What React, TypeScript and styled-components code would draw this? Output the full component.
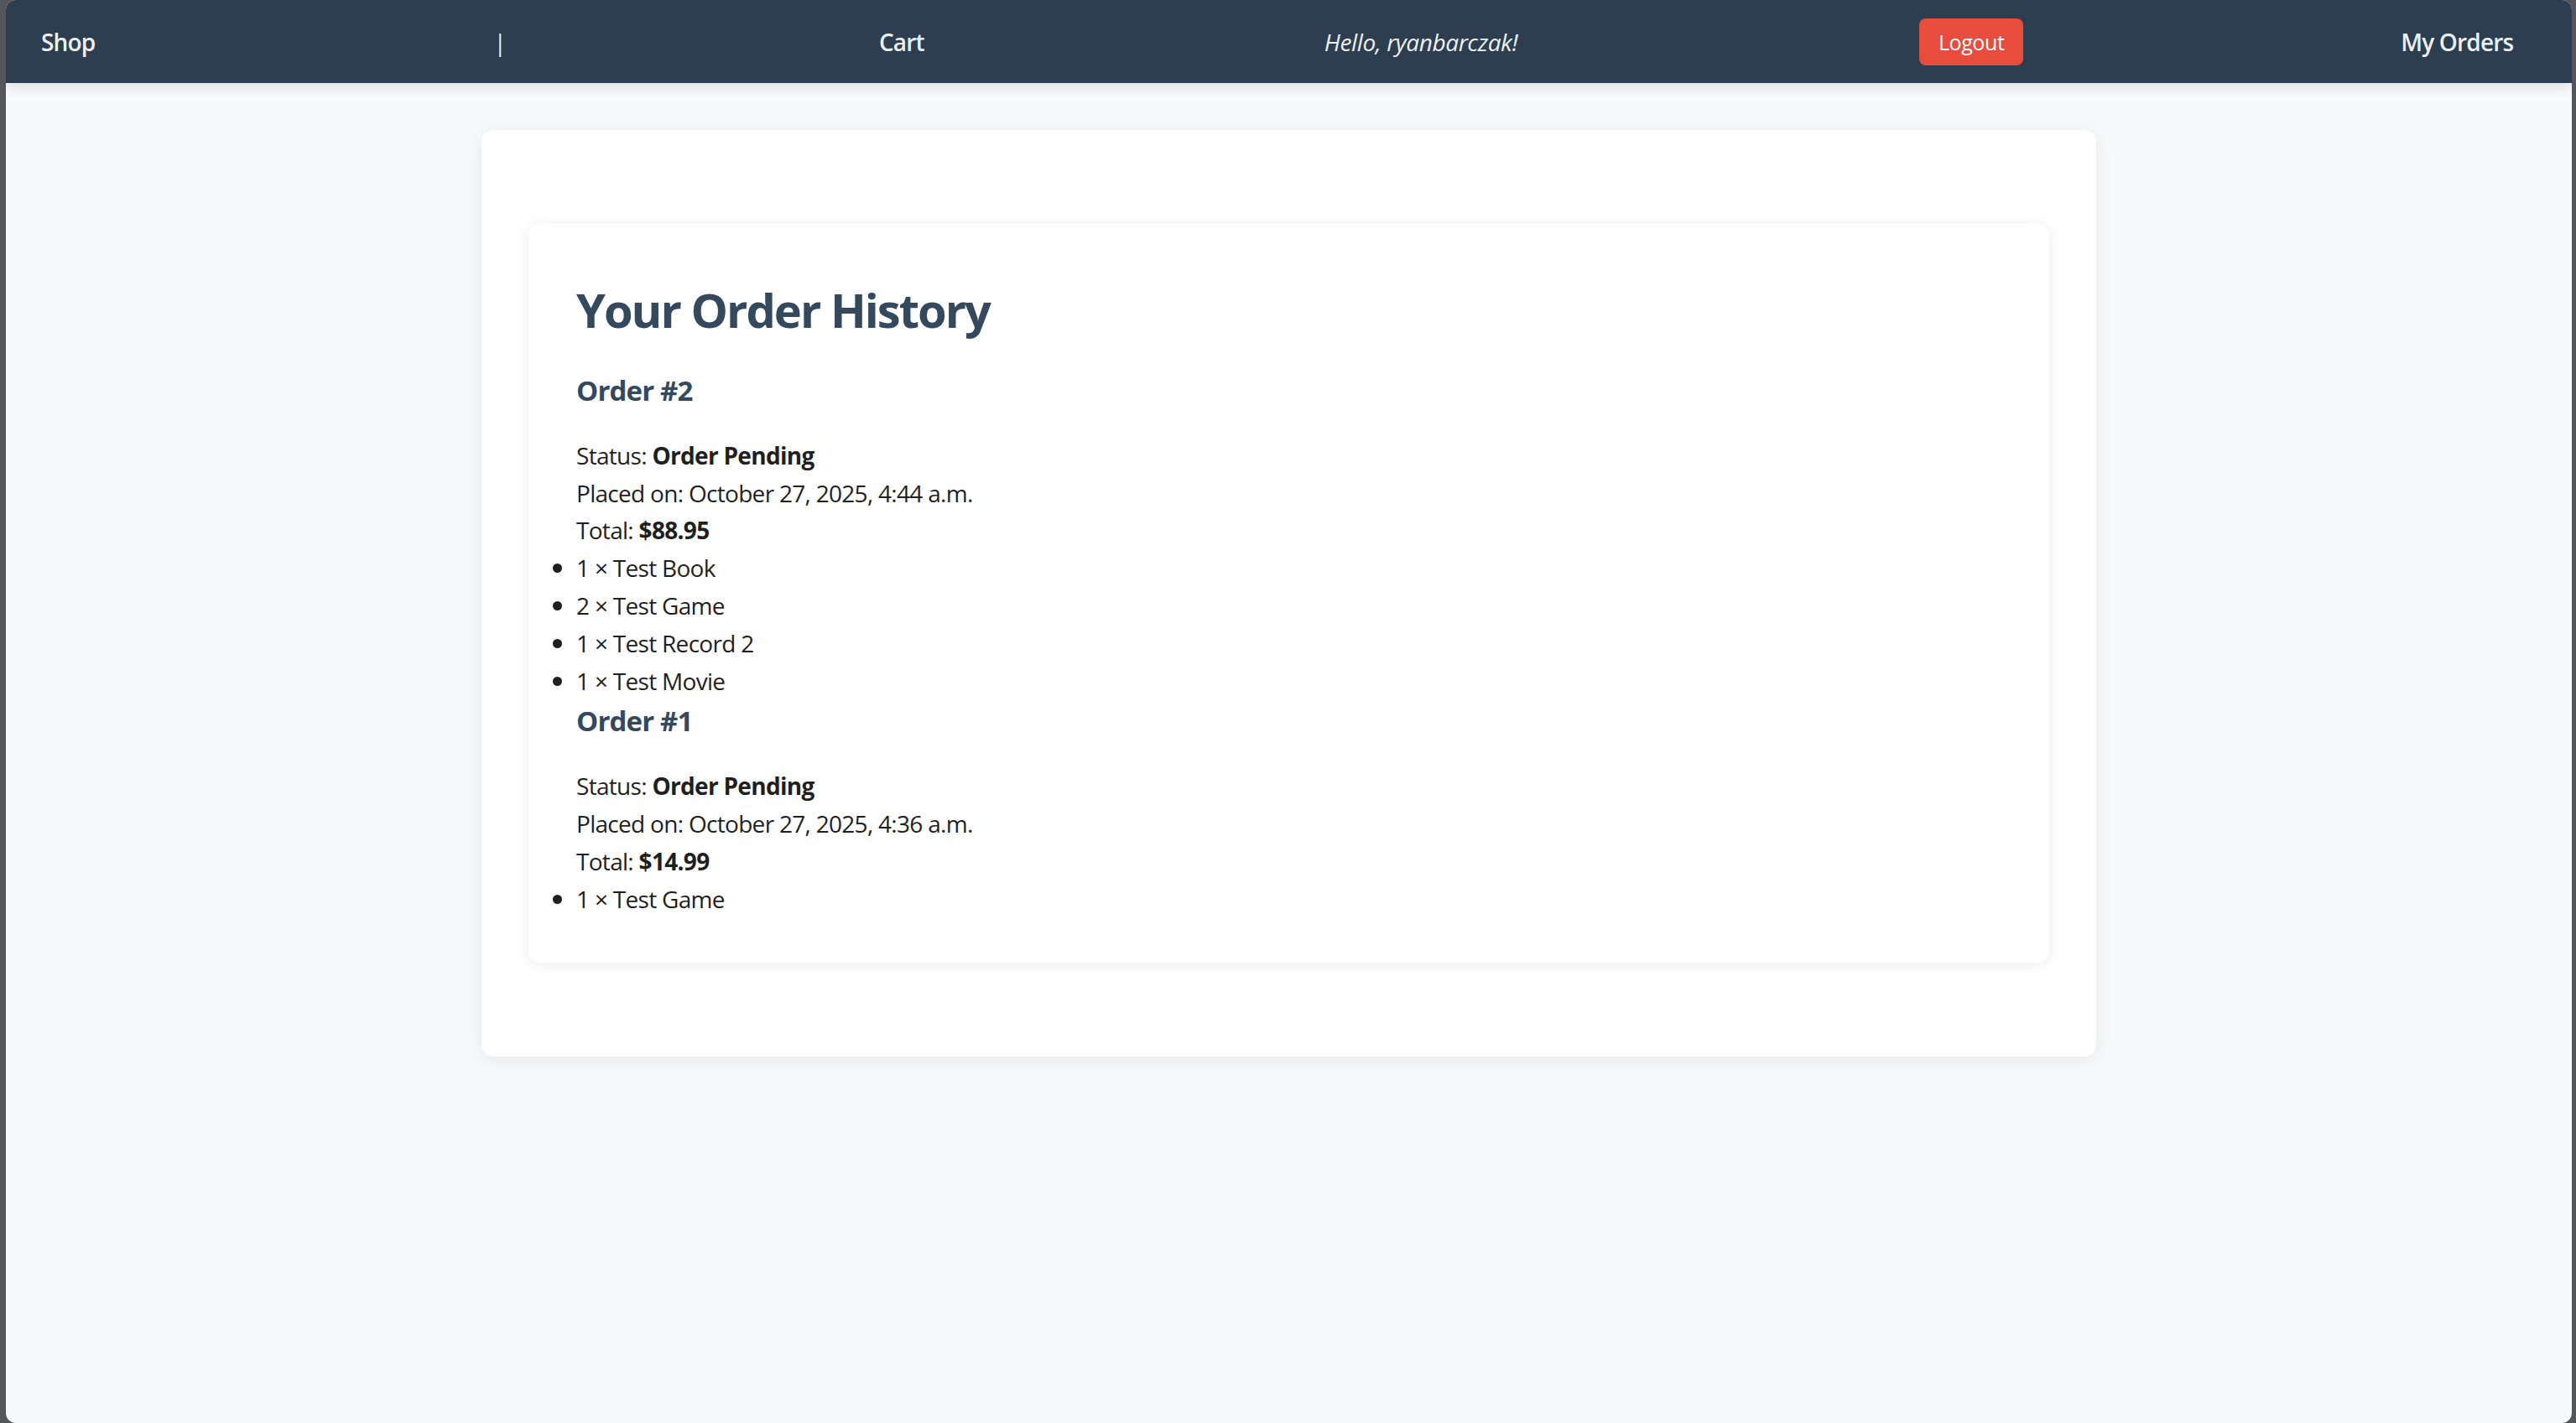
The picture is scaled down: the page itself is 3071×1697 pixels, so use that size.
import React from "react";
import styled, { createGlobalStyle } from "styled-components";

const GlobalStyle = createGlobalStyle`
  html, body {
    margin: 0;
    padding: 0;
    background: #54565c;
  }
  body {
    font-family: "Open Sans", "Noto Sans", "Liberation Sans", sans-serif;
  }
  * { box-sizing: border-box; }
`;

const Window = styled.div`
  margin: 0 5px 0 7px;
  height: 1697px;
  background: #f8f9fa;
  border-radius: 12px;
  overflow: hidden;
  display: flex;
  flex-direction: column;
`;

const NavBar = styled.nav`
  flex: 0 0 99px;
  height: 99px;
  background: #2c3e50;
  display: flex;
  align-items: center;
  justify-content: flex-start;
  padding: 0 0 0 42px;
  box-shadow: 0 4px 16px rgba(0, 0, 0, 0.12);
  position: relative;
  z-index: 1;
  white-space: nowrap;
`;

const NavItem = styled.div<{ $gap?: number }>`
  flex: 0 0 auto;
  margin-left: ${(p) => p.$gap ?? 0}px;
  display: flex;
  align-items: center;
  white-space: nowrap;
`;

const NavLink = styled.a`
  color: #ecf0f1;
  font-size: 28px;
  font-weight: 600;
  text-decoration: none;
  letter-spacing: -0.8px;
`;

const Divider = styled.span`
  color: #ecf0f1;
  font-size: 28px;
  font-weight: 400;
`;

const Greeting = styled.span`
  color: #ecf0f1;
  font-size: 28px;
  font-style: italic;
  letter-spacing: -0.4px;
`;

const LogoutButton = styled.button`
  height: 56px;
  width: 124px;
  background: #e74c3c;
  color: #ffffff;
  border: none;
  border-radius: 8px;
  font-family: inherit;
  font-size: 25px;
  letter-spacing: -0.4px;
  padding: 0;
`;

const Main = styled.main`
  flex: 1;
  display: flex;
  justify-content: center;
  padding-top: 56px;
`;

const OuterCard = styled.section`
  width: 1925px;
  align-self: flex-start;
  background: #ffffff;
  border-radius: 14px;
  padding: 112px 56px;
  box-shadow: 0 4px 22px rgba(20, 30, 50, 0.08);
`;

const InnerCard = styled.div`
  background: #ffffff;
  border-radius: 14px;
  padding: 56px 57px 54px;
  box-shadow: 0 2px 18px rgba(20, 30, 50, 0.08);
  color: #1f1f1f;
  font-size: 28px;
  line-height: 44.8px;
  letter-spacing: -0.7px;
`;

const Title = styled.h1`
  margin: 13px 0 37px;
  font-size: 56px;
  line-height: 67px;
  font-weight: 700;
  color: #34495e;
  letter-spacing: -2px;
`;

const OrderHeading = styled.h3`
  margin: 0 0 28px;
  font-size: 33px;
  line-height: 52.8px;
  font-weight: 700;
  color: #34495e;
  letter-spacing: -0.85px;
`;

const InfoLine = styled.p`
  margin: 0;
`;

const Strong = styled.strong`
  font-weight: 700;
`;

const ItemList = styled.ul`
  margin: 0;
  padding: 0;
  list-style: disc outside;
`;

const Item = styled.li`
  &::marker {
    font-size: 30px;
  }
`;

type Order = {
  id: number;
  status: string;
  placed: string;
  total: string;
  items: { qty: number; name: string }[];
};

const orders: Order[] = [
  {
    id: 2,
    status: "Order Pending",
    placed: "October 27, 2025, 4:44 a.m.",
    total: "$88.95",
    items: [
      { qty: 1, name: "Test Book" },
      { qty: 2, name: "Test Game" },
      { qty: 1, name: "Test Record 2" },
      { qty: 1, name: "Test Movie" },
    ],
  },
  {
    id: 1,
    status: "Order Pending",
    placed: "October 27, 2025, 4:36 a.m.",
    total: "$14.99",
    items: [{ qty: 1, name: "Test Game" }],
  },
];

export default function App() {
  return (
    <>
      <GlobalStyle />
      <Window>
        <NavBar>
          <NavItem>
            <NavLink href="#">Shop</NavLink>
          </NavItem>
          <NavItem $gap={475}>
            <Divider>|</Divider>
          </NavItem>
          <NavItem $gap={444}>
            <NavLink href="#">Cart</NavLink>
          </NavItem>
          <NavItem $gap={477}>
            <Greeting>Hello, ryanbarczak!</Greeting>
          </NavItem>
          <NavItem $gap={479}>
            <LogoutButton>Logout</LogoutButton>
          </NavItem>
          <NavItem $gap={450}>
            <NavLink href="#">My Orders</NavLink>
          </NavItem>
        </NavBar>
        <Main>
          <OuterCard>
            <InnerCard>
              <Title>Your Order History</Title>
              {orders.map((o) => (
                <div key={o.id}>
                  <OrderHeading>Order #{o.id}</OrderHeading>
                  <InfoLine>
                    Status: <Strong>{o.status}</Strong>
                  </InfoLine>
                  <InfoLine>Placed on: {o.placed}</InfoLine>
                  <InfoLine>
                    Total: <Strong>{o.total}</Strong>
                  </InfoLine>
                  <ItemList>
                    {o.items.map((it, i) => (
                      <Item key={i}>
                        {it.qty} × {it.name}
                      </Item>
                    ))}
                  </ItemList>
                </div>
              ))}
            </InnerCard>
          </OuterCard>
        </Main>
      </Window>
    </>
  );
}
